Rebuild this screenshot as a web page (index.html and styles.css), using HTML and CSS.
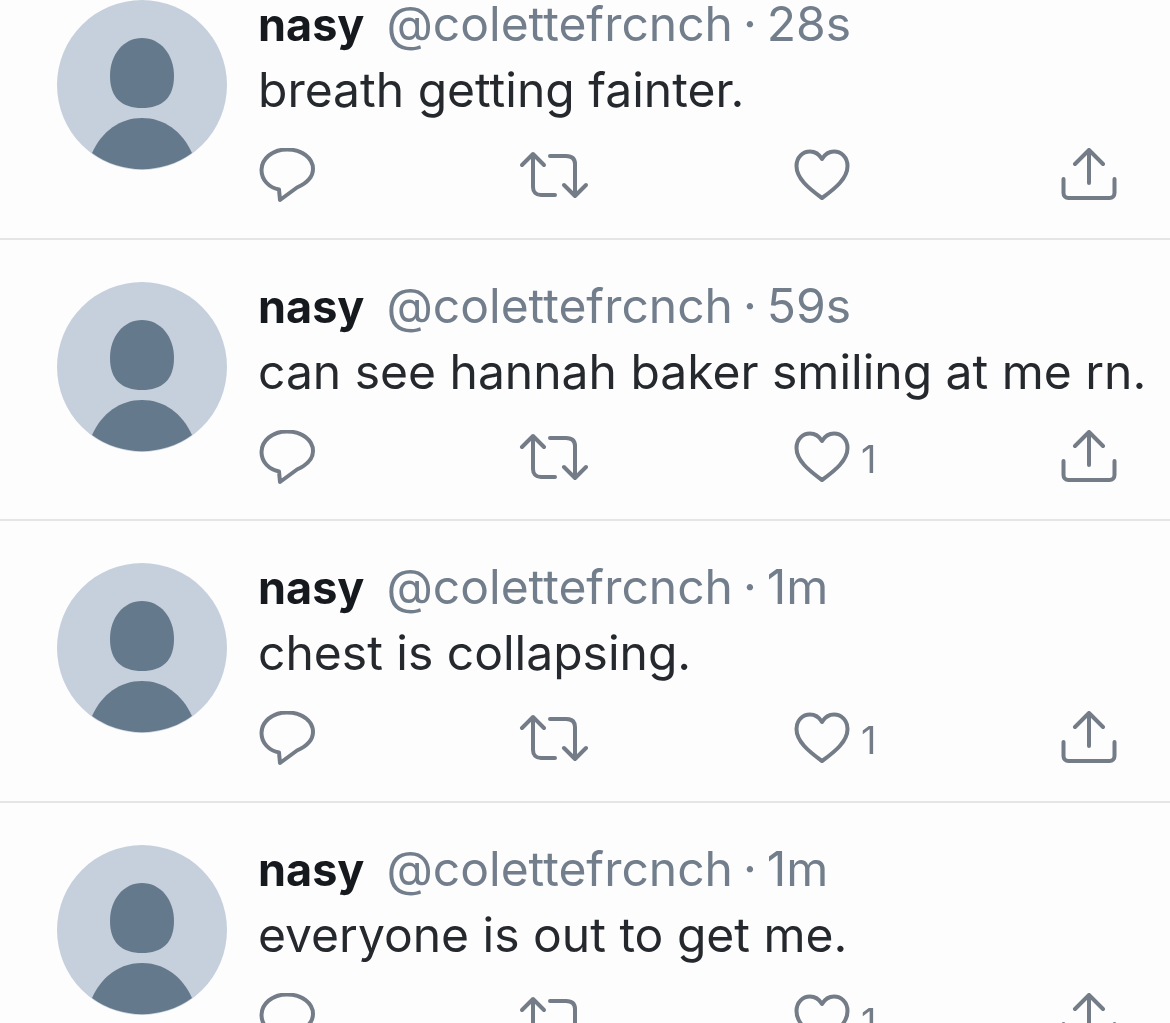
FILE: index.html
```html
<!DOCTYPE html>
<html lang="en">
<head>
<meta charset="utf-8">
<title>Tweets</title>
<link rel="stylesheet" href="styles.css">
</head>
<body>
<svg class="sprite" aria-hidden="true">
  <symbol id="avatar" viewBox="0 0 170 170">
    <circle cx="85" cy="85" r="85" fill="#c6d0dc"/>
    <path fill="#65798c" d="M85 38C103 38 117 54 117 76C117 98 105 108 85 108C65 108 53 98 53 76C53 54 67 38 85 38Z"/>
    <path fill="#65798c" d="M35 153C45 131 63 118 85 118C107 118 125 131 135 153A85 85 0 0 1 35 153Z"/>
  </symbol>
  <symbol id="reply" viewBox="0 0 70 60">
    <path d="M35 1.500C20 1.500 9.500 11 9.500 22C9.500 32 17 39.500 27 41.500L28 52L45 39.500C55 35 61 29 61 21C61 10 50 1.500 35 1.500Z"/>
  </symbol>
  <symbol id="retweet" viewBox="0 0 70 60">
    <path d="M3 17L14 6L25 17M14 6V39C14 44 17 47 22 47H36M31 8H47C53 8 56 11 56 16V48M45 37L56 48L67 37"/>
  </symbol>
  <symbol id="heart" viewBox="0 0 70 60">
    <path d="M36 50C22 40 10.500 30 10.500 18C10.500 9 17 3.500 24 3.500C29 3.500 33 6 36 11C39 6 43 3.500 48 3.500C55 3.500 61.500 9 61.500 18C61.500 30 50 40 36 50Z"/>
  </symbol>
  <symbol id="share" viewBox="0 0 70 60">
    <path d="M22 16L36 2L50 16M36 2V35M10.500 31V45C10.500 48 12.500 50 15.500 50H56.500C59.500 50 61.500 48 61.500 45V31"/>
  </symbol>
</svg>
<main class="feed">
  <div class="list">
    <article class="tweet">
      <svg class="avatar"><use href="#avatar"/></svg>
      <div class="body">
        <p class="meta"><b class="name">nasy</b><span class="handle">@colettefrcnch</span><span class="dot">·</span><span class="time">28s</span></p>
        <p class="text">breath getting fainter.</p>
        <div class="actions">
          <span class="action"><svg class="icon"><use href="#reply"/></svg></span>
          <span class="action"><svg class="icon"><use href="#retweet"/></svg></span>
          <span class="action"><svg class="icon"><use href="#heart"/></svg></span>
          <span class="action"><svg class="icon"><use href="#share"/></svg></span>
        </div>
      </div>
    </article>
    <article class="tweet">
      <svg class="avatar"><use href="#avatar"/></svg>
      <div class="body">
        <p class="meta"><b class="name">nasy</b><span class="handle">@colettefrcnch</span><span class="dot">·</span><span class="time">59s</span></p>
        <p class="text">can see hannah baker smiling at me rn.</p>
        <div class="actions">
          <span class="action"><svg class="icon"><use href="#reply"/></svg></span>
          <span class="action"><svg class="icon"><use href="#retweet"/></svg></span>
          <span class="action"><svg class="icon"><use href="#heart"/></svg><span class="count">1</span></span>
          <span class="action"><svg class="icon"><use href="#share"/></svg></span>
        </div>
      </div>
    </article>
    <article class="tweet">
      <svg class="avatar"><use href="#avatar"/></svg>
      <div class="body">
        <p class="meta"><b class="name">nasy</b><span class="handle">@colettefrcnch</span><span class="dot">·</span><span class="time">1m</span></p>
        <p class="text">chest is collapsing.</p>
        <div class="actions">
          <span class="action"><svg class="icon"><use href="#reply"/></svg></span>
          <span class="action"><svg class="icon"><use href="#retweet"/></svg></span>
          <span class="action"><svg class="icon"><use href="#heart"/></svg><span class="count">1</span></span>
          <span class="action"><svg class="icon"><use href="#share"/></svg></span>
        </div>
      </div>
    </article>
    <article class="tweet">
      <svg class="avatar"><use href="#avatar"/></svg>
      <div class="body">
        <p class="meta"><b class="name">nasy</b><span class="handle">@colettefrcnch</span><span class="dot">·</span><span class="time">1m</span></p>
        <p class="text">everyone is out to get me.</p>
        <div class="actions">
          <span class="action"><svg class="icon"><use href="#reply"/></svg></span>
          <span class="action"><svg class="icon"><use href="#retweet"/></svg></span>
          <span class="action"><svg class="icon"><use href="#heart"/></svg><span class="count">1</span></span>
          <span class="action"><svg class="icon"><use href="#share"/></svg></span>
        </div>
      </div>
    </article>
  </div>
</main>
</body>
</html>
```

FILE: styles.css
```css
* { box-sizing: border-box; }
html, body { margin: 0; padding: 0; background: #fdfdfe; }
.sprite { display: none; }
.feed { height: 1023px; overflow: hidden; }
.list { margin-top: -42px; filter: blur(0.6px); }
.tweet {
  height: 281.5px;
  display: flex;
  align-items: flex-start;
  padding: 33px 0 0 57px;
  border-bottom: 2px solid #e3e5e7;
  font-family: Inter, "Liberation Sans", sans-serif;
}
.avatar { width: 170px; height: 170px; margin-top: 9px; flex: none; }
.body { margin-left: 31px; min-width: 0; flex: 1; }
.meta, .text { margin: 0; font-size: 48px; line-height: 65px; white-space: nowrap; }
.name { color: #16191d; font-size: 45px; font-weight: 700; margin-right: 22px; }
.handle, .dot, .time { color: #727e8b; }
.dot { margin: 0 10px; }
.text { color: #25292e; }
.actions {
  display: grid;
  grid-template-columns: repeat(4, 267px);
  margin: 26px 0 0 -6px;
}
.action { display: flex; align-items: flex-start; }
.icon {
  width: 70px;
  height: 60px;
  flex: none;
  fill: none;
  stroke: #737c87;
  stroke-width: 4;
  stroke-linecap: round;
  stroke-linejoin: round;
  overflow: visible;
}
.count { margin-left: 5px; font-size: 38px; line-height: 58px; color: #737c87; }
```
